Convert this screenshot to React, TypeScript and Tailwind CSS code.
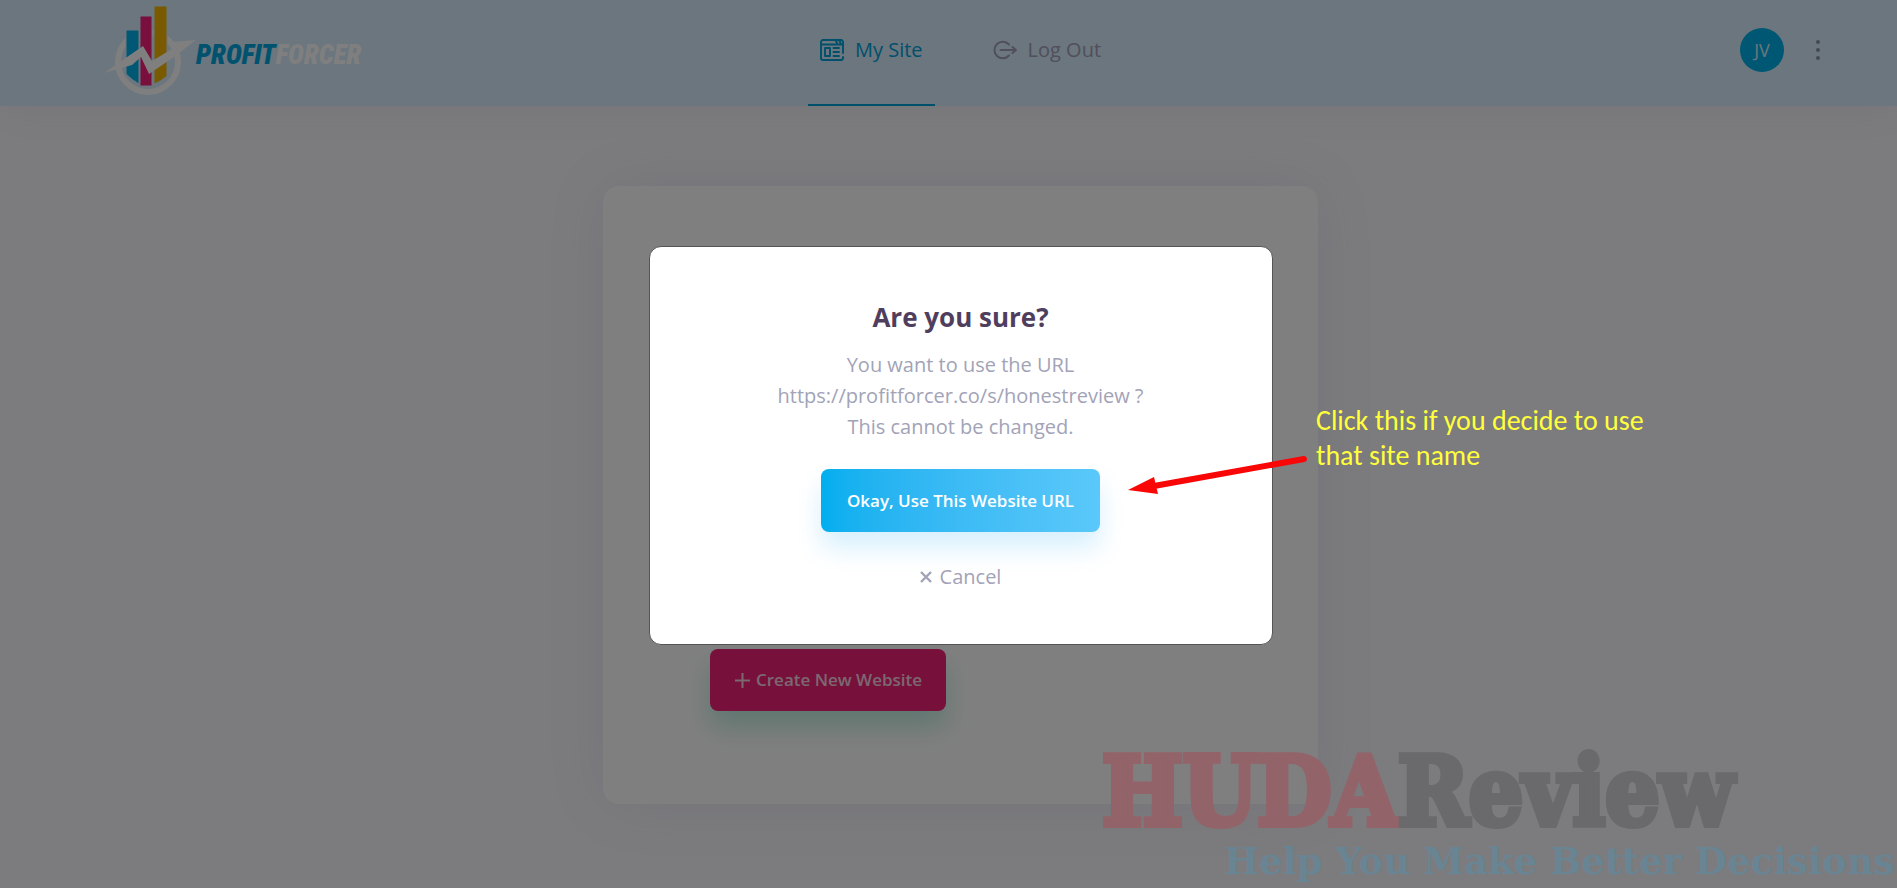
import React from "react";

function Logo() {
  return (
    <a href="#" aria-label="Profit Forcer" className="flex items-center pb-2">
      <svg width="92" height="96" viewBox="0 0 92 96" aria-hidden="true">
        <circle cx="44" cy="61" r="30" fill="none" stroke="#fff" strokeWidth="6" />
        <path d="M22 29h13v54q-7-4-13-10z" fill="#00b0e8" stroke="#d6ecfc" />
        <path d="M36 15h12v70h-12z" fill="#f01e78" stroke="#d6ecfc" />
        <path d="M50 5h13v70q-5 5-13 8z" fill="#f5b400" stroke="#d6ecfc" />
        <path d="M0 72L39 45l9 15 25-15-5-4 24-2-22 17-25 17-8-17-9 8z" fill="#fff" />
      </svg>
      <span className="pt-3 font-['Roboto_Condensed','Roboto',sans-serif] text-[27px] font-black italic text-[#00a5dc]">
        PROFIT<span className="text-white">FORCER</span>
      </span>
    </a>
  );
}

function SiteIcon() {
  return (
    <svg width="24" height="22" viewBox="0 0 24 22" fill="none" stroke="currentColor" strokeWidth="1.9" strokeLinecap="round" strokeLinejoin="round" aria-hidden="true">
      <path d="M23 14V3a2 2 0 0 0-2-2H3a2 2 0 0 0-2 2v16a2 2 0 0 0 2 2h18a2 2 0 0 0 2-2v-1M1 5.500h22M16 2l1 2M19.500 2l1 2" />
      <path d="M5 9h5v8H5zM13.500 9H19M13.500 13H19M13.500 17H19" />
    </svg>
  );
}

function LogoutIcon() {
  return (
    <svg width="24" height="20" viewBox="0 0 24 20" fill="none" stroke="currentColor" strokeWidth="2" strokeLinecap="round" strokeLinejoin="round" aria-hidden="true">
      <path d="M16 4.500A8.300 8.300 0 1 0 16 15.500M7.500 10H23M19.500 7l3.500 3-3.500 3" />
    </svg>
  );
}

function Header() {
  return (
    <header className="grid h-[106px] grid-cols-[1fr_auto_1fr] bg-[#d6ecfc] pl-6 shadow-[0_0_40px_rgba(82,63,105,0.08)]">
      <div className="flex items-center pl-20">
        <Logo />
      </div>
      <nav className="flex gap-[46px] text-xl font-medium">
        <a href="#" className="flex items-center gap-[11px] border-b-2 border-[#00a0d8] px-3 pb-1 text-[#00a0d8]">
          <SiteIcon />
          My Site
        </a>
        <a href="#" className="flex items-center gap-[11px] border-b-2 border-transparent px-3 pb-1 text-[#a09fb4]">
          <LogoutIcon />
          Log Out
        </a>
      </nav>
      <div className="flex items-center justify-end gap-7 pb-1.5 pr-[73px]">
        <button className="size-11 rounded-full bg-[#00aee6] text-lg text-[#d6ecfc]">JV</button>
        <button aria-label="More options" className="flex flex-col items-center gap-1 p-1">
          <span className="size-1 rounded-full bg-[#8e8ea8]" />
          <span className="size-1 rounded-full bg-[#8e8ea8]" />
          <span className="size-1 rounded-full bg-[#8e8ea8]" />
        </button>
      </div>
    </header>
  );
}

function ConfirmDialog() {
  return (
    <div role="dialog" aria-labelledby="confirm-title" className="flex w-[624px] flex-col items-center rounded-xl border border-[#555] bg-white px-8 pt-[50px] pb-[51px] text-center">
      <h2 id="confirm-title" className="text-[26px] leading-10 font-bold text-[#4f3e5e]">Are you sure?</h2>
      <p className="mt-3 text-[20px] leading-[31px] text-[#a2a3b7]">
        You want to use the URL
        <br />
        https://profitforcer.co/s/honestreview ?
        <br />
        This cannot be changed.
      </p>
      <button className="mt-[27px] h-[63px] rounded-lg bg-linear-to-r from-[#00aeef] to-[#5ac8fa] px-[26px] text-[17px] font-semibold text-white shadow-[0_16px_26px_rgba(0,160,240,0.16)]">
        Okay, Use This Website URL
      </button>
      <button className="mt-[29px] flex items-center gap-2 text-[20px] leading-8 text-[#a2a3b7]">
        <svg width="12" height="12" viewBox="0 0 12 12" fill="none" stroke="currentColor" strokeWidth="2.400" aria-hidden="true">
          <path d="M1 1l10 10M11 1L1 11" />
        </svg>
        Cancel
      </button>
    </div>
  );
}

export default function App() {
  return (
    <div className="relative min-h-screen overflow-hidden bg-[#f8f7fb] font-['Open_Sans','Noto_Sans',sans-serif]">
      <Header />
      <main className="flex justify-center pl-6 pt-20">
        <section className="flex h-[618px] w-[715px] flex-col items-start justify-end rounded-2xl bg-white px-[107px] pb-[93px] shadow-[0_0_60px_rgba(120,90,170,0.1)]">
          <button className="flex h-[62px] items-center gap-[5px] rounded-lg bg-[#ee2276] px-6 text-[17px] font-semibold text-[#f6d0e0] shadow-[0_16px_26px_rgba(10,187,135,0.25)]">
            <svg width="17" height="17" viewBox="0 0 17 17" fill="none" stroke="currentColor" strokeWidth="2" aria-hidden="true">
              <path d="M8.500 1v15M1 8.500h15" />
            </svg>
            Create New Website
          </button>
        </section>
      </main>
      <div className="absolute inset-0 flex items-start justify-center bg-black/50 pl-6 pt-[246px]">
        <ConfirmDialog />
      </div>
      <svg className="absolute left-[1128px] top-[455px]" width="182" height="42" viewBox="0 0 182 42" aria-hidden="true">
        <path d="M26 31L176 4" stroke="#f90606" strokeWidth="6" strokeLinecap="round" />
        <path d="M0 35L26 22l4 17z" fill="#f90606" />
      </svg>
      <p className="absolute left-[1316px] top-[403px] w-[350px] font-['Carlito','Lato',sans-serif] text-[28px] leading-[35px] text-[#ffff3c]">
        Click this if you decide to use that site name
      </p>
      <div className="absolute bottom-0 left-[1102px] whitespace-nowrap font-['DejaVu_Serif',serif] font-bold">
        <p className="font-['DejaVu_Serif_Condensed','DejaVu_Serif',serif] text-[95px] leading-[92px] text-[#6a6a6c] [-webkit-text-stroke:6px_#6a6a6c]">
          <span className="text-[#93636a] [-webkit-text-stroke:6px_#93636a]">HUDA</span>Review
        </p>
        <p className="pb-1 pl-[122px] text-[37px] leading-[46px] text-[rgba(70,150,190,0.35)]">Help You Make Better Decisions</p>
      </div>
    </div>
  );
}
